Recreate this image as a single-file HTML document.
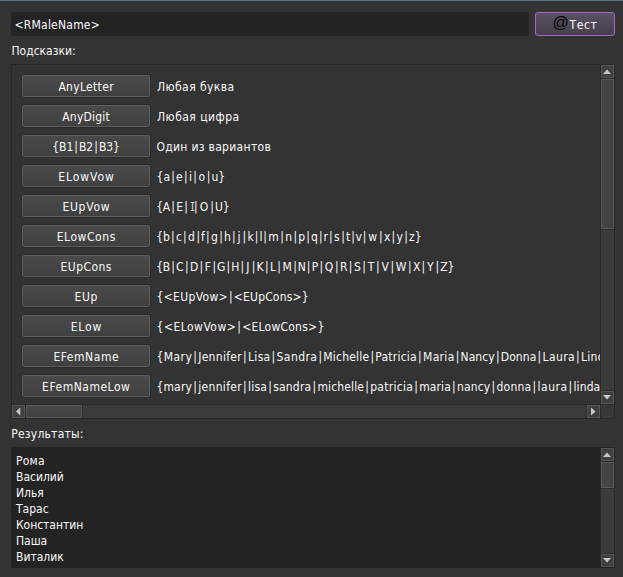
<!DOCTYPE html>
<html lang="ru">
<head>
<meta charset="utf-8">
<title>Тест</title>
<style>
html,body{margin:0;padding:0;}
body{width:623px;height:577px;overflow:hidden;background:#333333;position:relative;
  font-family:"DejaVu Sans Condensed","Liberation Sans",sans-serif;font-size:12px;color:#fafafa;}
.abs{position:absolute;}
.topline1{left:0;top:0;width:623px;height:1px;background:#5f6e80;}
.topline2{left:0;top:1px;width:623px;height:1px;background:#2e2d2c;}
.txt{position:absolute;white-space:nowrap;line-height:14px;height:14px;}
.input{left:11px;top:12px;width:518px;height:24px;background:#232323;border-radius:3px;}
.testbtn{left:535px;top:12px;width:78px;height:22px;border:1px solid #a666cc;border-radius:3px;
  background:linear-gradient(#5b5262,#463f4b);}
.frame{left:11px;top:64px;width:602px;height:353px;border:1px solid #272727;background:#333333;}
.viewport{left:12px;top:65px;width:588px;height:339px;overflow:hidden;}
.btn{position:absolute;left:9px;width:128px;height:22px;border:1px solid #2a2a2a;border-radius:3px;
  background:linear-gradient(#4a4a4a,#3f3f3f);box-shadow:inset 0 0 0 1px #5d5d5d;}
.btn span{position:absolute;left:0;right:0;top:5px;text-align:center;line-height:14px;white-space:nowrap;}
.lab{position:absolute;left:145px;white-space:nowrap;line-height:14px;}
b{font-weight:normal;margin:0 1.18px;}
.sbtn{position:absolute;width:11px;height:11px;border:1px solid #555555;background:#404040;}
.thumb{position:absolute;border:1px solid #585858;background:linear-gradient(90deg,#464646,#414141);}
.track{position:absolute;background:#3b3b3b;}
.results{left:11px;top:447px;width:604px;height:121px;background:#232323;border-radius:1px;}
svg{position:absolute;left:0;top:0;overflow:visible;}
</style>
</head>
<body>
<div class="abs topline1"></div>
<div class="abs topline2"></div>

<!-- input field -->
<div class="abs input"></div>

<div class="txt" style="left:14.5px;top:18px;letter-spacing:0.227px;">&lt;RMaleName&gt;</div>

<!-- test button -->
<div class="abs testbtn"></div>
<div class="txt" style="left:552.5px;top:14px;font-family:'Liberation Sans',sans-serif;font-size:16px;line-height:18px;height:18px;color:#000000;">@</div>
<div class="txt" style="left:569.5px;top:18px;letter-spacing:0.644px;">Тест</div>
<div class="txt" style="left:11.5px;top:44px;letter-spacing:-0.01px;">Подсказки:</div>

<!-- hints frame -->
<div class="abs frame"></div>
<div class="abs viewport">
  <div class="btn" style="top:9px"><span style="letter-spacing:0.324px;padding-left:0.324px">AnyLetter</span></div>
  <div class="lab" id="lab0" style="left:145px;top:15px;letter-spacing:0.415px">Любая буква</div>
  <div class="btn" style="top:39px"><span style="letter-spacing:0.212px;padding-left:0.212px">AnyDigit</span></div>
  <div class="lab" id="lab1" style="left:145px;top:45px;letter-spacing:0.463px">Любая цифра</div>
  <div class="btn" style="top:69px"><span style="letter-spacing:-0.126px;padding-left:-0.126px">{B1<b>|</b>B2<b>|</b>B3}</span></div>
  <div class="lab" id="lab2" style="left:144.4px;top:75px;letter-spacing:0.31px">Один из вариантов</div>
  <div class="btn" style="top:99px"><span style="letter-spacing:0.958px;padding-left:0.958px">ELowVow</span></div>
  <div class="lab" id="lab3" style="left:144.3px;top:105px"><span class="s" style="letter-spacing:0.162px;margin-left:0.081px;margin-right:-0.081px">{a</span><b>|</b><span class="s" style="letter-spacing:0.062px;margin-left:0.031px;margin-right:-0.031px">e</span><b>|</b><span class="s" style="letter-spacing:0.306px;margin-left:0.153px;margin-right:-0.153px">i</span><b>|</b><span class="s" style="letter-spacing:0.809px;margin-left:0.405px;margin-right:-0.405px">o</span><b>|</b><span class="s" style="letter-spacing:-0.130px;margin-left:-0.065px;margin-right:0.065px">u}</span></div>
  <div class="btn" style="top:129px"><span style="letter-spacing:0.746px;padding-left:0.746px">EUpVow</span></div>
  <div class="lab" id="lab4" style="left:144.3px;top:135px"><span class="s" style="letter-spacing:-0.224px;margin-left:-0.112px;margin-right:0.112px">{A</span><b>|</b><span class="s" style="letter-spacing:0.086px;margin-left:0.043px;margin-right:-0.043px">E</span><b>|</b><span class="s" style="letter-spacing:-0.322px;margin-left:-0.161px;margin-right:0.161px"><i style="font-style:normal;font-family:'DejaVu Sans Mono',monospace;display:inline-block;transform:scaleX(.64);margin-left:0.3px;margin-right:-3.3px;">I</i></span><b>|</b><span class="s" style="letter-spacing:1.617px;margin-left:0.808px;margin-right:-0.808px">O</span><b>|</b><span class="s" style="letter-spacing:-0.034px;margin-left:-0.017px;margin-right:0.017px">U}</span></div>
  <div class="btn" style="top:159px"><span style="letter-spacing:0.561px;padding-left:0.561px">ELowCons</span></div>
  <div class="lab" id="lab5" style="left:144.3px;top:165px"><span class="s" style="letter-spacing:-0.062px;margin-left:-0.031px;margin-right:0.031px">{b</span><b>|</b><span class="s" style="letter-spacing:0.073px;margin-left:0.036px;margin-right:-0.036px">c</span><b>|</b><span class="s" style="letter-spacing:0.445px;margin-left:0.223px;margin-right:-0.223px">d</span><b>|</b><span class="s" style="letter-spacing:-0.192px;margin-left:-0.096px;margin-right:0.096px">f</span><b>|</b><span class="s" style="letter-spacing:0.354px;margin-left:0.177px;margin-right:-0.177px">g</span><b>|</b><span class="s" style="letter-spacing:-0.036px;margin-left:-0.018px;margin-right:0.018px">h</span><b>|</b><span class="s" style="letter-spacing:1.604px;margin-left:0.802px;margin-right:-0.802px">j</span><b>|</b><span class="s" style="letter-spacing:0.054px;margin-left:0.027px;margin-right:-0.027px">k</span><b>|</b><span class="s" style="letter-spacing:-0.598px;margin-left:-0.299px;margin-right:0.299px">l</span><b>|</b><span class="s" style="letter-spacing:0.386px;margin-left:0.193px;margin-right:-0.193px">m</span><b>|</b><span class="s" style="letter-spacing:0.464px;margin-left:0.232px;margin-right:-0.232px">n</span><b>|</b><span class="s" style="letter-spacing:-0.052px;margin-left:-0.026px;margin-right:0.026px">p</span><b>|</b><span class="s" style="letter-spacing:-0.146px;margin-left:-0.073px;margin-right:0.073px">q</span><b>|</b><span class="s" style="letter-spacing:-0.333px;margin-left:-0.167px;margin-right:0.167px">r</span><b>|</b><span class="s" style="letter-spacing:0.480px;margin-left:0.240px;margin-right:-0.240px">s</span><b>|</b><span class="s" style="letter-spacing:-0.130px;margin-left:-0.065px;margin-right:0.065px">t</span><b>|</b><span class="s" style="letter-spacing:-0.880px;margin-left:-0.440px;margin-right:0.440px">v</span><b>|</b><span class="s" style="letter-spacing:1.573px;margin-left:0.786px;margin-right:-0.786px">w</span><b>|</b><span class="s" style="letter-spacing:0.120px;margin-left:0.060px;margin-right:-0.060px">x</span><b>|</b><span class="s" style="letter-spacing:0.214px;margin-left:0.107px;margin-right:-0.107px">y</span><b>|</b><span class="s" style="letter-spacing:0.109px;margin-left:0.054px;margin-right:-0.054px">z}</span></div>
  <div class="btn" style="top:189px"><span style="letter-spacing:0.449px;padding-left:0.449px">EUpCons</span></div>
  <div class="lab" id="lab6" style="left:144.3px;top:195px"><span class="s" style="letter-spacing:-0.235px;margin-left:-0.117px;margin-right:0.117px">{B</span><b>|</b><span class="s" style="letter-spacing:0.061px;margin-left:0.030px;margin-right:-0.030px">C</span><b>|</b><span class="s" style="letter-spacing:0.391px;margin-left:0.196px;margin-right:-0.196px">D</span><b>|</b><span class="s" style="letter-spacing:0.589px;margin-left:0.294px;margin-right:-0.294px">F</span><b>|</b><span class="s" style="letter-spacing:-0.252px;margin-left:-0.126px;margin-right:0.126px">G</span><b>|</b><span class="s" style="letter-spacing:-0.018px;margin-left:-0.009px;margin-right:0.009px">H</span><b>|</b><span class="s" style="letter-spacing:1.920px;margin-left:0.960px;margin-right:-0.960px">J</span><b>|</b><span class="s" style="letter-spacing:0.232px;margin-left:0.116px;margin-right:-0.116px">K</span><b>|</b><span class="s" style="letter-spacing:0.389px;margin-left:0.195px;margin-right:-0.195px">L</span><b>|</b><span class="s" style="letter-spacing:0.591px;margin-left:0.295px;margin-right:-0.295px">M</span><b>|</b><span class="s" style="letter-spacing:-0.565px;margin-left:-0.282px;margin-right:0.282px">N</span><b>|</b><span class="s" style="letter-spacing:0.201px;margin-left:0.101px;margin-right:-0.101px">P</span><b>|</b><span class="s" style="letter-spacing:0.919px;margin-left:0.460px;margin-right:-0.460px">Q</span><b>|</b><span class="s" style="letter-spacing:0.405px;margin-left:0.203px;margin-right:-0.203px">R</span><b>|</b><span class="s" style="letter-spacing:0.748px;margin-left:0.374px;margin-right:-0.374px">S</span><b>|</b><span class="s" style="letter-spacing:1.014px;margin-left:0.507px;margin-right:-0.507px">T</span><b>|</b><span class="s" style="letter-spacing:1.232px;margin-left:0.616px;margin-right:-0.616px">V</span><b>|</b><span class="s" style="letter-spacing:0.826px;margin-left:0.413px;margin-right:-0.413px">W</span><b>|</b><span class="s" style="letter-spacing:0.013px;margin-left:0.006px;margin-right:-0.006px">X</span><b>|</b><span class="s" style="letter-spacing:1.514px;margin-left:0.757px;margin-right:-0.757px">Y</span><b>|</b><span class="s" style="letter-spacing:-0.226px;margin-left:-0.113px;margin-right:0.113px">Z}</span></div>
  <div class="btn" style="top:219px"><span style="letter-spacing:0.603px;padding-left:0.603px">EUp</span></div>
  <div class="lab" id="lab7" style="left:144.3px;top:225px"><span class="s" style="letter-spacing:0.341px;margin-left:0.171px;margin-right:-0.171px">{&lt;EUpVow&gt;</span><b>|</b><span class="s" style="letter-spacing:0.167px;margin-left:0.084px;margin-right:-0.084px">&lt;EUpCons&gt;}</span></div>
  <div class="btn" style="top:249px"><span style="letter-spacing:0.846px;padding-left:0.846px">ELow</span></div>
  <div class="lab" id="lab8" style="left:144.3px;top:255px"><span class="s" style="letter-spacing:0.481px;margin-left:0.240px;margin-right:-0.240px">{&lt;ELowVow&gt;</span><b>|</b><span class="s" style="letter-spacing:0.250px;margin-left:0.125px;margin-right:-0.125px">&lt;ELowCons&gt;}</span></div>
  <div class="btn" style="top:279px"><span style="letter-spacing:0.544px;padding-left:0.544px">EFemName</span></div>
  <div class="lab" id="lab9" style="left:144.3px;top:285px"><span class="s" style="letter-spacing:0.418px;margin-left:0.209px;margin-right:-0.209px">{Mary</span><b>|</b><span class="s" style="letter-spacing:0.315px;margin-left:0.158px;margin-right:-0.158px">Jennifer</span><b>|</b><span class="s" style="letter-spacing:0.287px;margin-left:0.143px;margin-right:-0.143px">Lisa</span><b>|</b><span class="s" style="letter-spacing:0.449px;margin-left:0.225px;margin-right:-0.225px">Sandra</span><b>|</b><span class="s" style="letter-spacing:0.203px;margin-left:0.102px;margin-right:-0.102px">Michelle</span><b>|</b><span class="s" style="letter-spacing:0.225px;margin-left:0.113px;margin-right:-0.113px">Patricia</span><b>|</b><span class="s" style="letter-spacing:0.345px;margin-left:0.172px;margin-right:-0.172px">Maria</span><b>|</b><span class="s" style="letter-spacing:0.070px;margin-left:0.035px;margin-right:-0.035px">Nancy</span><b>|</b><span class="s" style="letter-spacing:0.098px;margin-left:0.049px;margin-right:-0.049px">Donna</span><b>|</b><span class="s" style="letter-spacing:0.378px;margin-left:0.189px;margin-right:-0.189px">Laura</span><b>|</b><span class="s" style="letter-spacing:0.279px;margin-left:0.140px;margin-right:-0.140px">Linda</span><b>|</b><span class="s" style="letter-spacing:0.279px;margin-left:0.140px;margin-right:-0.140px">Elizabeth</span><b>|</b><span class="s" style="letter-spacing:0.279px;margin-left:0.140px;margin-right:-0.140px">Barbara}</span></div>
  <div class="btn" style="top:309px"><span style="letter-spacing:0.517px;padding-left:0.517px">EFemNameLow</span></div>
  <div class="lab" id="lab10" style="left:144.3px;top:315px"><span class="s" style="letter-spacing:0.177px;margin-left:0.088px;margin-right:-0.088px">{mary</span><b>|</b><span class="s" style="letter-spacing:0.338px;margin-left:0.169px;margin-right:-0.169px">jennifer</span><b>|</b><span class="s" style="letter-spacing:0.218px;margin-left:0.109px;margin-right:-0.109px">lisa</span><b>|</b><span class="s" style="letter-spacing:0.219px;margin-left:0.110px;margin-right:-0.110px">sandra</span><b>|</b><span class="s" style="letter-spacing:0.141px;margin-left:0.070px;margin-right:-0.070px">michelle</span><b>|</b><span class="s" style="letter-spacing:0.303px;margin-left:0.151px;margin-right:-0.151px">patricia</span><b>|</b><span class="s" style="letter-spacing:0.103px;margin-left:0.051px;margin-right:-0.051px">maria</span><b>|</b><span class="s" style="letter-spacing:0.178px;margin-left:0.089px;margin-right:-0.089px">nancy</span><b>|</b><span class="s" style="letter-spacing:0.250px;margin-left:0.125px;margin-right:-0.125px">donna</span><b>|</b><span class="s" style="letter-spacing:0.519px;margin-left:0.260px;margin-right:-0.260px">laura</span><b>|</b><span class="s" style="letter-spacing:0.118px;margin-left:0.059px;margin-right:-0.059px">linda</span><b>|</b><span class="s" style="letter-spacing:0.233px;margin-left:0.117px;margin-right:-0.117px">elizabeth</span><b>|</b><span class="s" style="letter-spacing:0.233px;margin-left:0.117px;margin-right:-0.117px">barbara}</span></div>
</div>

<!-- vertical scrollbar of hints -->
<div class="track" style="left:600px;top:65px;width:15px;height:339px;background:#2a2a2a;"></div>
<div class="track" style="left:601px;top:79px;width:13px;height:311px;"></div>
<div class="sbtn" style="left:601px;top:65px;"></div>
<div class="thumb" style="left:601px;top:79px;width:11px;height:148px;box-shadow:0 1px 0 #2c2c2c;"></div>
<div class="sbtn" style="left:601px;top:391px;"></div>

<!-- horizontal scrollbar of hints -->
<div class="track" style="left:12px;top:404px;width:603px;height:14px;background:#2a2a2a;"></div>
<div class="track" style="left:26px;top:405px;width:560px;height:13px;"></div>
<div class="sbtn" style="left:12px;top:405px;"></div>
<div class="thumb" style="left:26px;top:405px;width:54px;height:11px;background:linear-gradient(#464646,#414141);box-shadow:1px 0 0 #2c2c2c;"></div>
<div class="sbtn" style="left:587px;top:405px;"></div>
<div class="track" style="left:601px;top:405px;width:13px;height:13px;background:#383838;"></div>

<div class="txt" style="left:11.2px;top:427px;letter-spacing:0.229px;">Результаты:</div>

<!-- results -->
<div class="abs results"></div>
<div class="txt" style="left:16px;top:454px;letter-spacing:0.242px;">Рома</div>
<div class="txt" style="left:16px;top:470px;letter-spacing:-0.018px;">Василий</div>
<div class="txt" style="left:16px;top:486px;letter-spacing:0.0px;">Илья</div>
<div class="txt" style="left:16px;top:502px;letter-spacing:0.0px;">Тарас</div>
<div class="txt" style="left:16px;top:518px;letter-spacing:-0.044px;">Константин</div>
<div class="txt" style="left:16px;top:534px;letter-spacing:0.0px;">Паша</div>
<div class="txt" style="left:16px;top:550px;letter-spacing:0.0px;">Виталик</div>

<!-- results scrollbar -->
<div class="track" style="left:600px;top:448px;width:15px;height:119px;background:#2a2a2a;"></div>
<div class="track" style="left:601px;top:462px;width:13px;height:91px;"></div>
<div class="sbtn" style="left:601px;top:448px;"></div>
<div class="thumb" style="left:601px;top:462px;width:11px;height:24px;box-shadow:0 1px 0 #2c2c2c;"></div>
<div class="sbtn" style="left:601px;top:554px;"></div>

<!-- arrows -->
<svg width="623" height="577" viewBox="0 0 623 577">
  <g fill="#c9c9c9">
    <polygon points="603,74 611,74 607,69.5"/>
    <polygon points="603,395 611,395 607,399.5"/>
    <polygon points="20.3,407.5 20.3,415.5 16,411.5"/>
    <polygon points="591,407.5 591,415.5 595.5,411.5"/>
    <polygon points="603,457 611,457 607,452.5"/>
    <polygon points="603,558 611,558 607,562.5"/>
  </g>
</svg>
</body>
</html>
